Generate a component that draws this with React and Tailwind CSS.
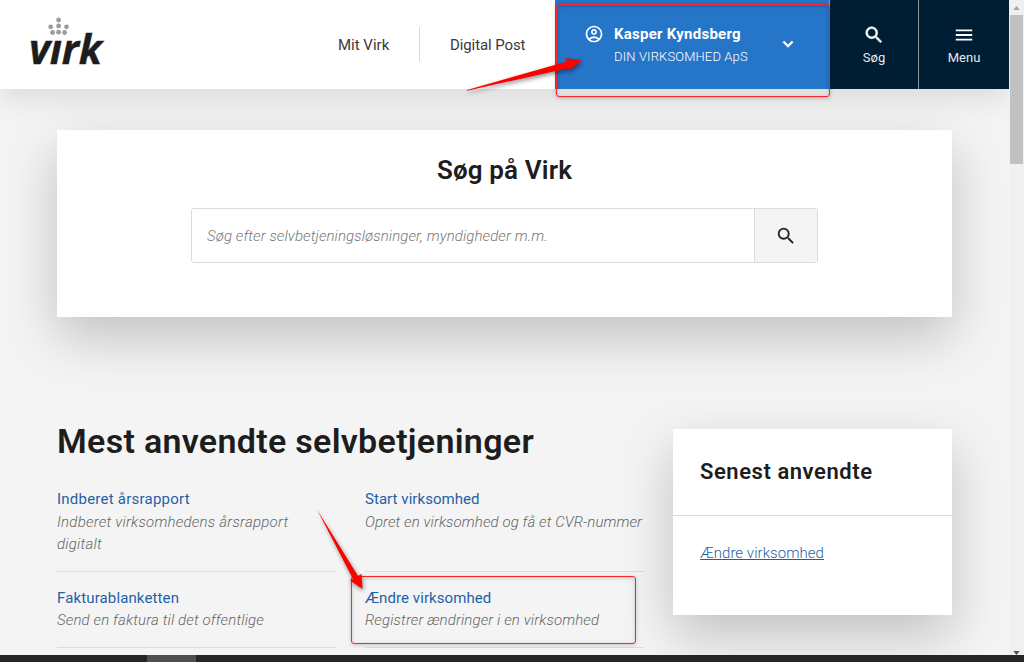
import { MdSearch, MdKeyboardArrowDown, MdMenu, MdOutlineAccountCircle } from "react-icons/md";

const services = [
  {
    title: "Indberet årsrapport",
    text: "Indberet virksomhedens årsrapport digitalt",
    titleClass: "tracking-[0.23px]",
    textClass: "block max-w-[250px] tracking-[0.23px]",
  },
  {
    title: "Start virksomhed",
    text: "Opret en virksomhed og få et CVR-nummer",
    titleClass: "tracking-[0.05px]",
    textClass: "whitespace-nowrap tracking-[0.09px]",
  },
  {
    title: "Fakturablanketten",
    text: "Send en faktura til det offentlige",
    titleClass: "tracking-[0.13px]",
    textClass: "tracking-[0.14px]",
  },
  {
    title: "Ændre virksomhed",
    text: "Registrer ændringer i en virksomhed",
    titleClass: "tracking-[0.08px]",
    textClass: "tracking-[0.12px]",
  },
];

function Logo() {
  return (
    <a href="#" className="relative ml-[29px] mt-[23px] block h-11 w-[76px]">
      <svg
        viewBox="0 0 24 20"
        className="absolute left-[18px] top-[-6px] h-5 w-6 fill-[#9b9b9b]"
      >
        <circle cx="11.6" cy="3" r="2.4" />
        <circle cx="3.7" cy="9.8" r="2.4" />
        <circle cx="11.6" cy="9" r="2.4" />
        <circle cx="19.5" cy="9.8" r="2.4" />
        <circle cx="5.6" cy="15.5" r="2.4" />
        <circle cx="11.6" cy="15.2" r="2.4" />
        <circle cx="17.6" cy="15.5" r="2.4" />
      </svg>
      <span className="block font-['Open_Sans',sans-serif] text-[41px] font-bold italic leading-[50px] tracking-[-0.2px] text-[#1d1d1d] [-webkit-text-stroke:0.4px_#1d1d1d]">
        vırk
      </span>
    </a>
  );
}

function Header() {
  return (
    <header className="relative z-10 flex h-[89px] shrink-0 bg-white shadow-[0_10px_30px_rgba(0,0,0,0.1)]">
      <Logo />
      <nav className="ml-auto flex items-center text-[15px] text-[#3a3a3a]">
        <a href="#" className="w-[81px] pt-px">Mit Virk</a>
        <span className="h-[35px] w-px bg-[#d9d9d9]" />
        <a href="#" className="w-[135px] pl-[30px] pt-px tracking-[-0.1px]">Digital Post</a>
      </nav>
      <button className="flex w-[274px] bg-[#2575c9] pl-[29px] pt-6 text-left text-white">
        <MdOutlineAccountCircle size={20} />
        <span className="ml-[10px] w-[164px]">
          <span className="block text-[15px] font-bold leading-5 tracking-[0.25px]">
            Kasper Kyndsberg
          </span>
          <span className="mt-[3px] block text-[13px] font-light leading-5 tracking-[0.13px]">
            DIN VIRKSOMHED ApS
          </span>
        </span>
        <MdKeyboardArrowDown
          size={20}
          className="mt-[10px] stroke-none [&>path:last-child]:stroke-white [&>path:last-child]:stroke-1"
        />
      </button>
      <button className="flex w-[90px] flex-col items-center border-x border-[#8b98a2] bg-[#001e33] pt-6 text-[13px] text-[#e5e9ec]">
        <MdSearch
          size={22}
          className="stroke-none text-white [&>path:last-child]:stroke-white [&>path:last-child]:stroke-[0.6]"
        />
        <span className="mt-0.5 leading-5">Søg</span>
      </button>
      <button className="flex w-[90px] flex-col items-center bg-[#001e33] pt-6 text-[13px] text-[#e5e9ec]">
        <MdMenu size={22} className="text-white" />
        <span className="mt-0.5 leading-5">Menu</span>
      </button>
    </header>
  );
}

function SearchCard() {
  return (
    <section className="mx-[57px] mt-[41px] h-[187px] bg-white pt-[22px] shadow-[0_20px_50px_rgba(0,0,0,0.21)]">
      <h2 className="text-center text-[26px] font-semibold leading-9 tracking-[0.15px] text-[#1d1d1d]">
        Søg på Virk
      </h2>
      <div className="mx-auto mt-5 flex h-[55px] w-[627px] overflow-hidden rounded-[3px] border border-[#dcdcdc]">
        <div className="flex flex-1 items-center pl-[15px] pt-px text-[15px] font-light italic tracking-[0.09px] text-[#777]">
          Søg efter selvbetjeningsløsninger, myndigheder m.m.
        </div>
        <button className="flex w-[63px] items-center justify-center border-l border-[#dcdcdc] bg-[#f4f4f4] text-[#222]">
          <MdSearch size={22} />
        </button>
      </div>
    </section>
  );
}

function Service({ title, text, titleClass, textClass }) {
  return (
    <li className="border-b border-[#dcdcdc] pb-[15px]">
      <a href="#" className="block text-[15px] leading-[22.5px] text-[#1f5fa8]">
        <span className={titleClass}>{title}</span>
      </a>
      <p className="text-[15px] font-light italic leading-[22.5px] text-[#666]">
        <span className={textClass}>{text}</span>
      </p>
    </li>
  );
}

function RecentCard() {
  return (
    <aside className="ml-[29px] mt-[7px] h-[186px] w-[279px] bg-white shadow-[0_20px_50px_rgba(0,0,0,0.21)]">
      <h3 className="h-[87px] border-b border-[#dcdcdc] pl-[27px] pt-[27px] text-[22px] font-semibold leading-8 tracking-[0.55px] text-[#1d1d1d]">
        Senest anvendte
      </h3>
      <a
        href="#"
        className="ml-[27px] mt-[26px] inline-block text-[15px] font-light leading-[22px] tracking-[0.05px] text-[#1f5fa8] underline"
      >
        Ændre virksomhed
      </a>
    </aside>
  );
}

function Scrollbar() {
  return (
    <div className="flex w-[15px] shrink-0 flex-col items-center bg-[#f0f0f0]">
      <svg viewBox="0 0 8 5" className="mt-[6px] h-1 w-[7px] fill-[#a3a3a3]">
        <path d="M0 5 4 0l4 5z" />
      </svg>
      <div className="mt-[5px] h-[149px] w-[13px] bg-[#c1c1c1]" />
      <svg viewBox="0 0 8 5" className="mt-auto h-1 w-[7px] fill-[#505050]">
        <path d="M0 0h8L4 5z" />
      </svg>
    </div>
  );
}

// Red frames and arrows pointing at the two steps of the guide
function Annotations() {
  return (
    <div className="pointer-events-none absolute inset-0 z-20">
      <div className="absolute left-[556px] top-[4px] h-[93px] w-[274px] rounded-[3px] border border-[#f52a30] shadow-[0_1px_4px_rgba(0,0,0,0.25),inset_0_1px_4px_rgba(0,0,0,0.2)]" />
      <div className="absolute left-[351px] top-[576px] h-[68px] w-[285px] rounded-[3px] border border-[#f52a30] shadow-[0_1px_4px_rgba(0,0,0,0.2),inset_0_1px_4px_rgba(0,0,0,0.18)]" />
      <svg
        viewBox="0 0 1024 662"
        className="absolute inset-0 h-full w-full fill-[#ff0000] drop-shadow-[1px_2px_2px_rgba(0,0,0,0.45)]"
      >
        <path d="M467 90.8 567 68.5 570 70 581.5 60.5 566 58 567 61.5 467 90z" />
        <path d="M317 509.5 358 576 361.5 574 362.5 589 350 580.5 353 579z" />
      </svg>
    </div>
  );
}

export default function App() {
  return (
    <div className="relative flex h-[662px] w-[1024px] flex-col overflow-hidden bg-[#f4f4f4] font-['Roboto',sans-serif]">
      <div className="flex h-[655px]">
        <div className="flex w-[1009px] flex-col overflow-hidden">
          <Header />
          <SearchCard />
          <main className="ml-[57px] mt-[105px] flex">
            <div className="w-[587px]">
              <h1 className="whitespace-nowrap text-[34px] font-semibold leading-[38px] tracking-[0.3px] text-[#1d1d1d]">
                Mest anvendte selvbetjeninger
              </h1>
              <ul className="mt-[28px] grid grid-cols-[279px_279px] gap-x-[29px] gap-y-[15px]">
                {services.map((s) => (
                  <Service key={s.title} {...s} />
                ))}
              </ul>
            </div>
            <RecentCard />
          </main>
        </div>
        <Scrollbar />
      </div>
      <footer className="h-[7px] bg-[#252525] pl-[147px]">
        <div className="h-full w-[49px] bg-[#4f4f4f]" />
      </footer>
      <Annotations />
    </div>
  );
}
